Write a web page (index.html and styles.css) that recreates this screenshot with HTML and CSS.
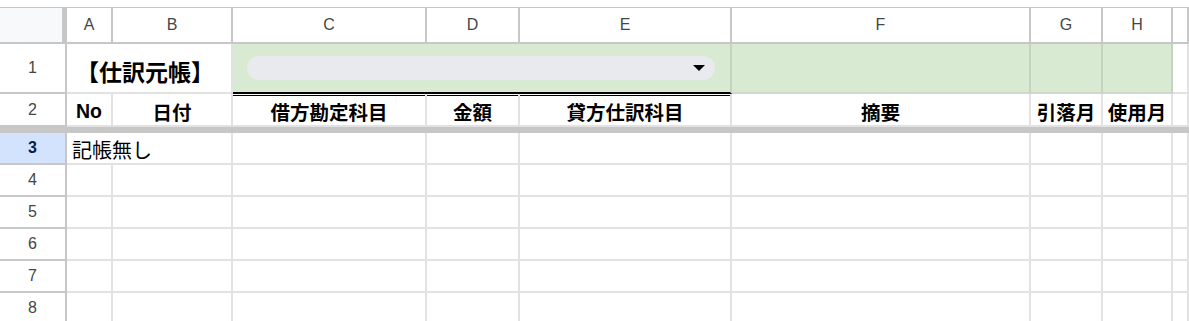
FILE: index.html
```html
<!DOCTYPE html>
<html>
<head>
    <meta charset="UTF-8" />
    <title>仕訳元帳</title>
    <link rel="stylesheet" href="styles.css">
</head>
<body>
<div class="sheet">
    <!-- column headers -->
    <div class="corner"></div>
    <div class="colhd">A</div>
    <div class="colhd">B</div>
    <div class="colhd">C</div>
    <div class="colhd">D</div>
    <div class="colhd">E</div>
    <div class="colhd">F</div>
    <div class="colhd">G</div>
    <div class="colhd">H</div>
    <div class="colhd"></div>

    <!-- row 1 -->
    <div class="rowhd">1</div>
    <div class="cell title span2">【仕訳元帳】</div>
    <div class="cell green picker span3">
        <div class="chip">
            <svg width="12" height="6" viewBox="0 0 12 6"><path d="M0 0h12L6 6z" fill="#000"/></svg>
        </div>
    </div>
    <div class="cell green"></div>
    <div class="cell green"></div>
    <div class="cell green"></div>
    <div class="cell"></div>

    <!-- row 2 -->
    <div class="rowhd">2</div>
    <div class="cell head">No</div>
    <div class="cell head">日付</div>
    <div class="cell head">借方勘定科目</div>
    <div class="cell head">金額</div>
    <div class="cell head">貸方仕訳科目</div>
    <div class="cell head">摘要</div>
    <div class="cell head">引落月</div>
    <div class="cell head">使用月</div>
    <div class="cell"></div>

    <div class="freeze"></div>

    <!-- row 3 -->
    <div class="rowhd sel">3</div>
    <div class="cell text span2">記帳無し</div>
    <div class="cell"></div>
    <div class="cell"></div>
    <div class="cell"></div>
    <div class="cell"></div>
    <div class="cell"></div>
    <div class="cell"></div>
    <div class="cell"></div>

    <div class="rowhd">4</div>
    <div class="cell"></div><div class="cell"></div><div class="cell"></div><div class="cell"></div><div class="cell"></div>
    <div class="cell"></div><div class="cell"></div><div class="cell"></div><div class="cell"></div>

    <div class="rowhd">5</div>
    <div class="cell"></div><div class="cell"></div><div class="cell"></div><div class="cell"></div><div class="cell"></div>
    <div class="cell"></div><div class="cell"></div><div class="cell"></div><div class="cell"></div>

    <div class="rowhd">6</div>
    <div class="cell"></div><div class="cell"></div><div class="cell"></div><div class="cell"></div><div class="cell"></div>
    <div class="cell"></div><div class="cell"></div><div class="cell"></div><div class="cell"></div>

    <div class="rowhd">7</div>
    <div class="cell"></div><div class="cell"></div><div class="cell"></div><div class="cell"></div><div class="cell"></div>
    <div class="cell"></div><div class="cell"></div><div class="cell"></div><div class="cell"></div>

    <div class="rowhd">8</div>
    <div class="cell"></div><div class="cell"></div><div class="cell"></div><div class="cell"></div><div class="cell"></div>
    <div class="cell"></div><div class="cell"></div><div class="cell"></div><div class="cell"></div>
</div>
</body>
</html>
```

FILE: styles.css
```css
*{
    margin: 0;
    padding: 0;
    box-sizing: border-box;
}
html, body{
    width: 1189px;
    height: 321px;
    overflow: hidden;
    background: #fff;
}
body{
    padding-top: 7px;
    font-family: "Liberation Sans", Arial, "Noto Sans CJK JP", sans-serif;
    color: #000;
}
.sheet{
    display: grid;
    grid-template-columns: 67px 46px 120px 194px 93px 212px 299px 72px 70px 1fr;
    grid-template-rows: 36px 50px 33px 6px repeat(6, 32px);
    border-top: 1px solid #c7c7c7;
}
.corner{
    background: #f8f9fa;
    border-right: 5px solid #c7c7c7;
    border-bottom: 2px solid #c7c7c7;
}
.colhd{
    display: flex;
    align-items: center;
    justify-content: center;
    font-size: 16px;
    color: #444746;
    border-right: 2px solid #c7c7c7;
    border-bottom: 2px solid #c7c7c7;
}
.rowhd{
    display: flex;
    align-items: center;
    justify-content: center;
    font-size: 16px;
    color: #444746;
    border-right: 2px solid #c7c7c7;
    border-bottom: 2px solid #c7c7c7;
}
.rowhd.sel{
    background: #d3e3fd;
    color: #041e49;
    font-weight: bold;
}
.cell{
    display: flex;
    align-items: center;
    border-right: 2px solid #e2e2e2;
    border-bottom: 2px solid #e2e2e2;
    white-space: nowrap;
}
.span2{ grid-column: span 2; }
.span3{ grid-column: span 3; }

.title{
    justify-content: center;
    padding-top: 5px;
    padding-right: 8px;
    font-size: 23px;
    font-weight: bold;
}
.green{
    background: #d9ead3;
    border-right-color: #c6d3c1;
    border-bottom-color: #cfd8cc;
}
.picker{
    padding: 0 15px 0 14px;
    border-bottom: 2px solid #000;
    box-shadow: 0 1px 0 #fff, 0 2px 0 #000;
}
.chip{
    flex: 1;
    height: 24px;
    border-radius: 12px;
    background: #e8eaed;
    display: flex;
    align-items: center;
    justify-content: flex-end;
    padding-right: 10px;
}
.head{
    justify-content: center;
    padding-top: 3px;
    font-size: 19.5px;
    font-weight: bold;
}
.text{
    padding: 3px 0 0 5px;
    font-size: 20px;
}
.freeze{
    grid-column: 1 / -1;
    background: #c7c7c7;
}
```
